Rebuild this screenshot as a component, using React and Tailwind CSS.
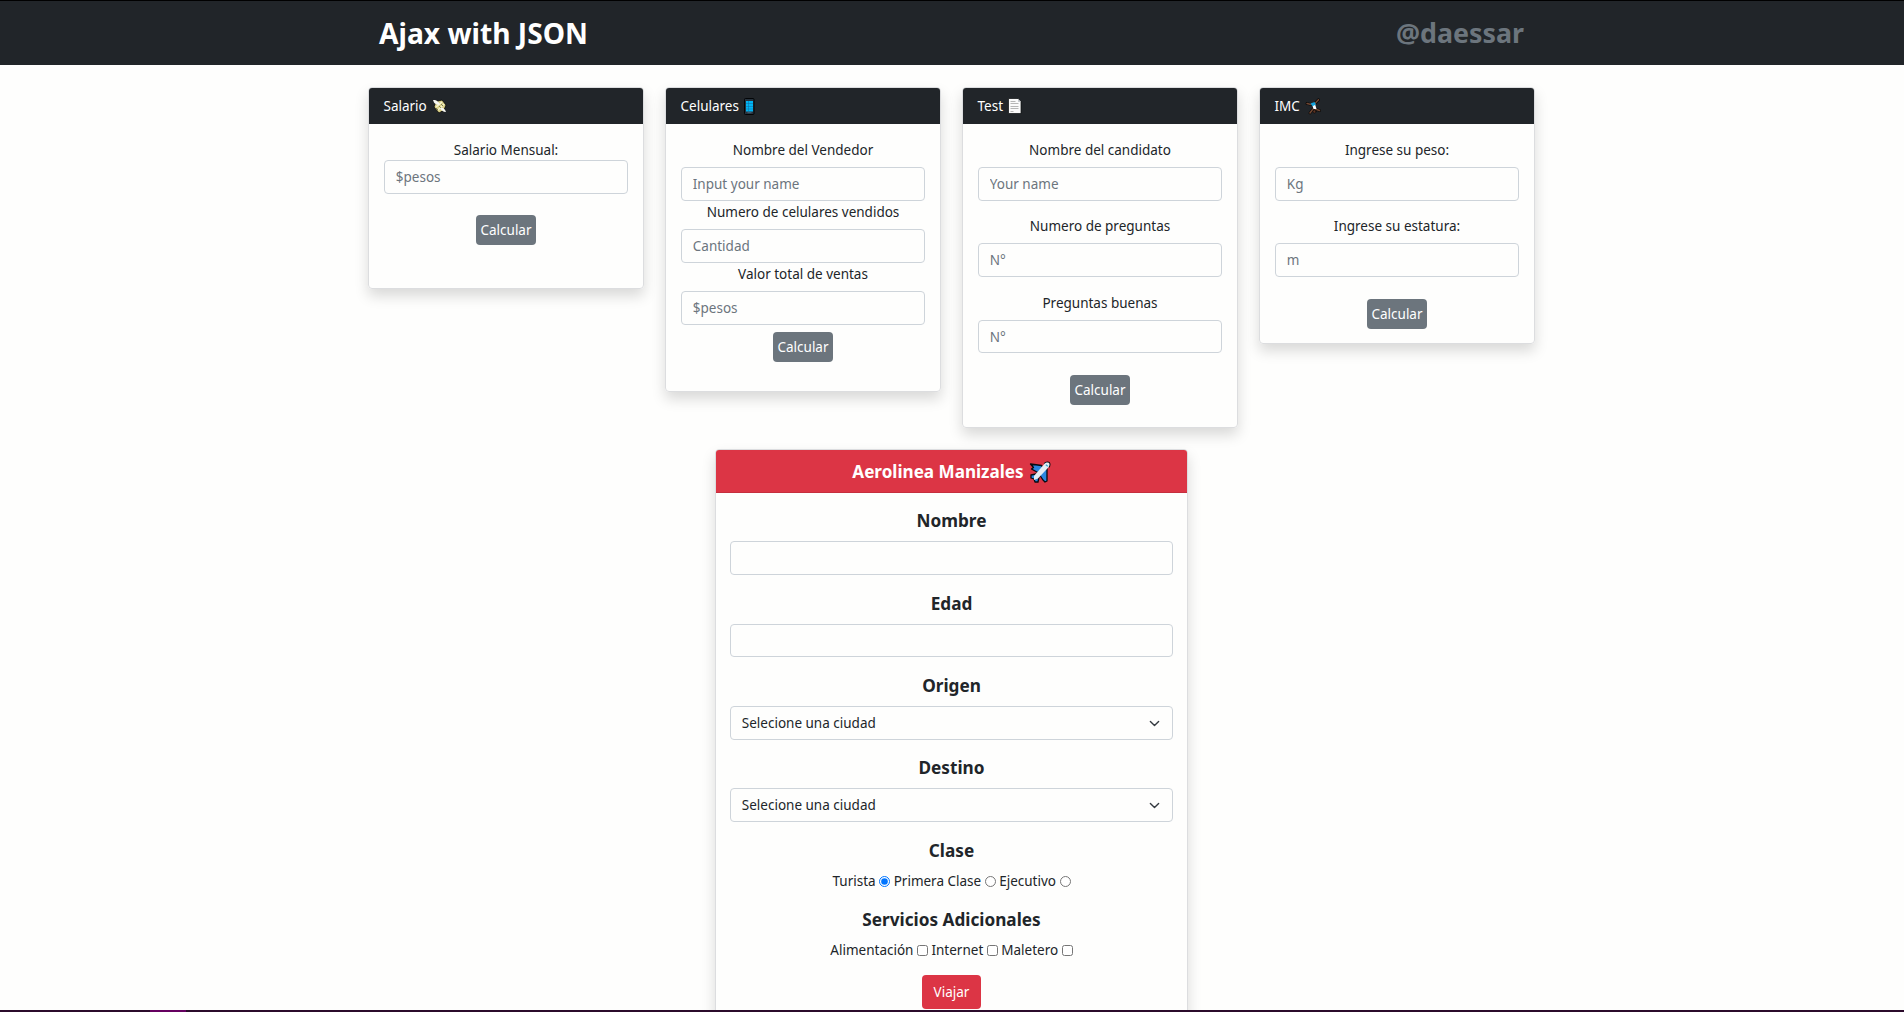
const MoneyIcon = () => (
  <svg className="h-[15px] w-[15px] shrink-0" viewBox="0 0 15 15">
    <path d="M4 2.500l6-1.500 4 5-2 5-5 3-5-6z" fill="#d8cf86" stroke="#070809" strokeWidth=".8" />
    <path d="M4 8l6-5M6 11l6-6" stroke="#f5f2d0" strokeWidth="1.400" />
    <path d="M7 7l2 2M9 5l2 2M4 9l2 2" stroke="#81824d" strokeWidth="1" />
    <path d="M1 1c4 0 6 2 7 5C5 6 3 5 2 3.500zM14 13c-3 0-5-2-6-4 3-1 5 1 6 4z" fill="#f7f7f2" />
  </svg>
);
const PhoneIcon = () => (
  <svg className="h-[17px] w-[11px] shrink-0" viewBox="0 0 11 17">
    <rect x=".5" y=".5" width="9.500" height="16" rx="1" fill="#26333e" stroke="#030507" />
    <path d="M2 3h7v10.500H2z" fill="#00b4f4" />
    <path d="M2 5.500h7M2 8.500h7M2 11h7M4.500 3v10" stroke="#126a9c" strokeWidth=".5" />
    <path d="M3.500 14.700h4" stroke="#4b6275" />
  </svg>
);
const PageIcon = () => (
  <svg className="h-[16px] w-[14px] shrink-0" viewBox="0 0 14 16">
    <path d="M.5.5h9.500l3 3v12H.5z" fill="#fafafa" stroke="#090b0d" strokeWidth=".7" />
    <path d="M10 1v3h3" fill="#c7cbd0" />
    <path d="M2.500 3.500h5M2.500 5.500h8M2.500 8.500h8M2.500 10.500h8M2.500 13.500h3" stroke="#a5a5a5" strokeWidth=".8" />
  </svg>
);
const CartwheelIcon = () => (
  <svg className="h-[17px] w-[17px] shrink-0" viewBox="0 0 17 17" fill="none" strokeLinecap="round">
    <path d="M9.500 6L13.500 1.700M6 6.500L2 5.500M8 11l-3 4M10 11l4.500 1.500" stroke="#090706" strokeWidth="2.800" />
    <path d="M9.500 6L13.500 1.700M6 6.500L2 5.500M8 11l-3 4M10 11l4.500 1.500" stroke="#704733" strokeWidth="1.500" />
    <path d="M7 6h3l1.500 5H8.500z" fill="#fff" />
    <path d="M5.500 5.500L9.500 4l1.500 2.500-3.500 1.700z" fill="#16a4dc" />
    <circle cx="9.500" cy="13.500" r="1.600" fill="#5c3524" stroke="#090706" strokeWidth=".6" />
  </svg>
);
const PlaneIcon = () => (
  <svg className="h-[22px] w-[22px] shrink-0" viewBox="0 0 22 22" strokeLinejoin="round">
    <path d="M1.500 3l11 1.500 3 4-5 4-8-4.500 2-1.500zM13 8l5-1v13l-2 1-2-2-4-6zM2 14l5-1 3 3-1 5h-3l-1-3-3-1z" fill="#2b86de" stroke="#070b10" strokeWidth="1.300" />
    <path d="M15.500 2.800c1.500-1.700 5-2 5 .7 0 1-.4 1.900-1 2.700" fill="none" stroke="#070b10" strokeWidth="2" />
    <path d="M5 15L15.500 2.800c1.500-1.700 5-2 5 .7 0 1-.4 1.900-1 2.700L9 17.500l-4 1.500z" fill="#e5edf3" />
    <path d="M16.800 3.800l2 1.500" stroke="#34a9d9" strokeWidth="1.300" />
  </svg>
);

const cards = [
  {
    title: "Salario", Icon: MoneyIcon, height: "h-[202px]", action: "mt-[21px]",
    fields: [{ label: "Salario Mensual:", hint: "$pesos", box: "", labelBox: "h-[20px]" }],
  },
  {
    title: "Celulares", Icon: PhoneIcon, height: "h-[305px]", action: "mt-[7px]",
    fields: [
      { label: "Nombre del Vendedor", hint: "Input your name", box: "", labelBox: "h-[27px]" },
      { label: "Numero de celulares vendidos", hint: "Cantidad", box: "mt-[1px]", labelBox: "h-[27px]" },
      { label: "Valor total de ventas", hint: "$pesos", box: "mt-[1px]", labelBox: "h-[27px]" },
    ],
  },
  {
    title: "Test", Icon: PageIcon, height: "h-[341px]", action: "mt-[22px]",
    fields: [
      { label: "Nombre del candidato", hint: "Your name", box: "", labelBox: "h-[27px]" },
      { label: "Numero de preguntas", hint: "N°", box: "mt-[15px]", labelBox: "h-[27px]" },
      { label: "Preguntas buenas", hint: "N°", box: "mt-[16px]", labelBox: "h-[27px]", short: true },
    ],
  },
  {
    title: "IMC", Icon: CartwheelIcon, height: "h-[257px]", action: "mt-[22px]",
    fields: [
      { label: "Ingrese su peso:", hint: "Kg", box: "", labelBox: "h-[27px]" },
      { label: "Ingrese su estatura:", hint: "m", box: "mt-[15px]", labelBox: "h-[27px]" },
    ],
  },
];

const shadow = "shadow-[0_7px_14px_rgba(0,0,0,0.15)]";
const inputStyle = "block w-full rounded-[4px] border border-[#ced4da] bg-[#fefefd] px-[10.800px] placeholder:text-[#6c757d] placeholder:opacity-100";

function Card({ card }) {
  const { Icon } = card;
  return (
    <section className={`w-[276px] rounded-[4px] border border-[#dcdddf] ${shadow} ${card.height}`}>
      <h2 className="flex h-[36px] items-center gap-[5px] rounded-t-[3px] bg-[#212529] px-[14.500px] text-white">
        {card.title} <Icon />
      </h2>
      <div className="px-[15px] pt-[16px] text-center">
        {card.fields.map((f) => (
          <label key={f.label} className={`block ${f.box}`}>
            <span className={`block leading-5 ${f.labelBox}`}>{f.label}</span>
            <input className={`${inputStyle} ${f.short ? "h-[33px]" : "h-[34px]"}`} placeholder={f.hint} />
          </label>
        ))}
        <button className={`h-[30px] w-[60px] rounded-[4px] bg-[#6c757d] text-white ${card.action}`}>Calcular</button>
      </div>
    </section>
  );
}

const Heading = ({ children }) => (
  <h3 className="h-[31px] text-center text-[17.200px] leading-[22px] font-bold">{children}</h3>
);

const CitySelect = () => (
  <button className={`${inputStyle} flex h-[34px] items-center justify-between pt-[1px]`}>
    Selecione una ciudad
    <svg className="mr-[1px] h-[11px] w-[11px]" viewBox="0 0 16 16" fill="none" stroke="#343a40" strokeWidth="2" strokeLinecap="round" strokeLinejoin="round">
      <path d="M2 5l6 6 6-6" />
    </svg>
  </button>
);

function Options({ type, items }) {
  return (
    <div className="flex h-[20px] items-center justify-center gap-[3.500px] leading-5">
      {items.map((name, i) => (
        <label key={name} className="flex items-center gap-[3.500px]">
          {name}
          <input type={type} name={type} defaultChecked={type === "radio" && i === 0} className="m-0 h-[11px] w-[11px]" />
        </label>
      ))}
    </div>
  );
}

export default function App() {
  return (
    <div className="flex h-[1012px] w-full flex-col overflow-hidden bg-[#fefefd] font-['Noto_Sans','Open_Sans',sans-serif] text-[13.500px] text-[#212529]">
      <header className="h-[65px] shrink-0 border-t border-black bg-[#212529]">
        <div className="mx-auto flex h-full w-[1146px] items-center justify-between font-bold">
          <h1 className="text-[28.200px] text-white">Ajax with JSON</h1>
          <span className="mr-[1px] pt-[1px] text-[26.800px] text-[#6c757d]">@daessar</span>
        </div>
      </header>
      <main className="min-h-0 flex-1 overflow-hidden pt-[22px] pr-[1px]">
        <div className="mx-auto flex h-[341px] w-[1167px] items-start justify-between">
          {cards.map((c) => <Card key={c.title} card={c} />)}
        </div>
        <section className={`mx-auto mt-[21px] h-[620px] w-[473px] rounded-[4px] border border-[#dcdddf] ${shadow}`}>
          <h2 className="flex h-[43px] items-center justify-center gap-[5px] rounded-t-[3px] border-b border-[#c52f3e] bg-[#dc3545] pt-[1px] text-[17.100px] font-bold text-white">
            Aerolinea Manizales <PlaneIcon />
          </h2>
          <div className="px-[14px] pt-[17px]">
            <Heading>Nombre</Heading>
            <input className={`${inputStyle} h-[34px]`} />
            <div className="mt-[18px]"><Heading>Edad</Heading><input className={`${inputStyle} h-[33px]`} /></div>
            <div className="mt-[18px]"><Heading>Origen</Heading><CitySelect /></div>
            <div className="mt-[17px]"><Heading>Destino</Heading><CitySelect /></div>
            <div className="mt-[18px]"><Heading>Clase</Heading><Options type="radio" items={["Turista", "Primera Clase", "Ejecutivo"]} /></div>
            <div className="mt-[18px]"><Heading>Servicios Adicionales</Heading><Options type="checkbox" items={["Alimentación", "Internet", "Maletero"]} /></div>
            <button className="mx-auto mt-[15px] block h-[34px] w-[59px] rounded-[4px] bg-[#dc3545] text-white">Viajar</button>
          </div>
        </section>
      </main>
      <footer className="h-[2px] shrink-0 bg-[#2b0b2b]">
        <div className="ml-[150px] h-full w-[36px] bg-[#650060]" />
      </footer>
    </div>
  );
}
